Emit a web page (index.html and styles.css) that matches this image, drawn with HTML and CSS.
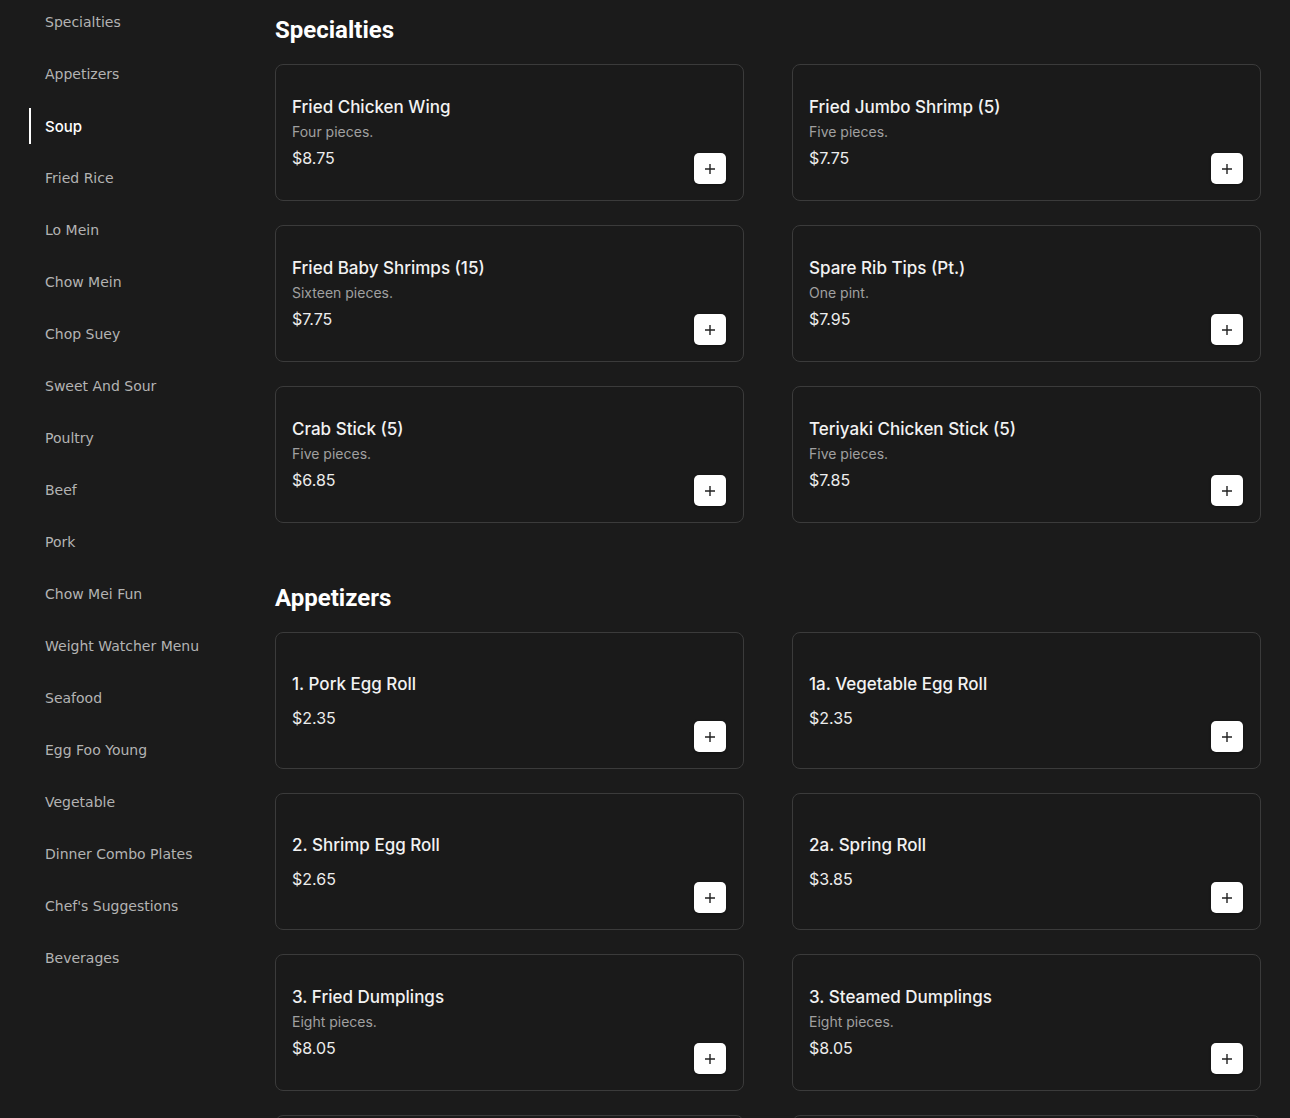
FILE: index.html
```html
<!DOCTYPE html>
<html>
<head>
<meta charset="utf-8">
<link rel="stylesheet" href="styles.css">
</head>
<body>
<div class="page">
  <nav class="sidebar">
    <a class="nav-item">Specialties</a>
    <a class="nav-item">Appetizers</a>
    <a class="nav-item active">Soup</a>
    <a class="nav-item">Fried Rice</a>
    <a class="nav-item">Lo Mein</a>
    <a class="nav-item">Chow Mein</a>
    <a class="nav-item">Chop Suey</a>
    <a class="nav-item">Sweet And Sour</a>
    <a class="nav-item">Poultry</a>
    <a class="nav-item">Beef</a>
    <a class="nav-item">Pork</a>
    <a class="nav-item">Chow Mei Fun</a>
    <a class="nav-item">Weight Watcher Menu</a>
    <a class="nav-item">Seafood</a>
    <a class="nav-item">Egg Foo Young</a>
    <a class="nav-item">Vegetable</a>
    <a class="nav-item">Dinner Combo Plates</a>
    <a class="nav-item">Chef's Suggestions</a>
    <a class="nav-item">Beverages</a>
  </nav>
  <main class="content">
    <section class="section">
      <h2 class="section-title">Specialties</h2>
      <div class="grid">
        <div class="card"><div class="info"><div class="name">Fried Chicken Wing</div><div class="desc">Four pieces.</div><div class="price">$8.75</div></div><button class="add"><svg viewBox="0 0 12 12" width="12" height="12"><path d="M6 1v10M1 6h10" stroke="#222" stroke-width="1.4"/></svg></button></div>
        <div class="card"><div class="info"><div class="name">Fried Jumbo Shrimp (5)</div><div class="desc">Five pieces.</div><div class="price">$7.75</div></div><button class="add"><svg viewBox="0 0 12 12" width="12" height="12"><path d="M6 1v10M1 6h10" stroke="#222" stroke-width="1.4"/></svg></button></div>
        <div class="card"><div class="info"><div class="name">Fried Baby Shrimps (15)</div><div class="desc">Sixteen pieces.</div><div class="price">$7.75</div></div><button class="add"><svg viewBox="0 0 12 12" width="12" height="12"><path d="M6 1v10M1 6h10" stroke="#222" stroke-width="1.4"/></svg></button></div>
        <div class="card"><div class="info"><div class="name">Spare Rib Tips (Pt.)</div><div class="desc">One pint.</div><div class="price">$7.95</div></div><button class="add"><svg viewBox="0 0 12 12" width="12" height="12"><path d="M6 1v10M1 6h10" stroke="#222" stroke-width="1.4"/></svg></button></div>
        <div class="card"><div class="info"><div class="name">Crab Stick (5)</div><div class="desc">Five pieces.</div><div class="price">$6.85</div></div><button class="add"><svg viewBox="0 0 12 12" width="12" height="12"><path d="M6 1v10M1 6h10" stroke="#222" stroke-width="1.4"/></svg></button></div>
        <div class="card"><div class="info"><div class="name">Teriyaki Chicken Stick (5)</div><div class="desc">Five pieces.</div><div class="price">$7.85</div></div><button class="add"><svg viewBox="0 0 12 12" width="12" height="12"><path d="M6 1v10M1 6h10" stroke="#222" stroke-width="1.4"/></svg></button></div>
      </div>
    </section>
    <section class="section">
      <h2 class="section-title">Appetizers</h2>
      <div class="grid">
        <div class="card"><div class="info"><div class="name">1. Pork Egg Roll</div><div class="price solo">$2.35</div></div><button class="add"><svg viewBox="0 0 12 12" width="12" height="12"><path d="M6 1v10M1 6h10" stroke="#222" stroke-width="1.4"/></svg></button></div>
        <div class="card"><div class="info"><div class="name">1a. Vegetable Egg Roll</div><div class="price solo">$2.35</div></div><button class="add"><svg viewBox="0 0 12 12" width="12" height="12"><path d="M6 1v10M1 6h10" stroke="#222" stroke-width="1.4"/></svg></button></div>
        <div class="card"><div class="info"><div class="name">2. Shrimp Egg Roll</div><div class="price solo">$2.65</div></div><button class="add"><svg viewBox="0 0 12 12" width="12" height="12"><path d="M6 1v10M1 6h10" stroke="#222" stroke-width="1.4"/></svg></button></div>
        <div class="card"><div class="info"><div class="name">2a. Spring Roll</div><div class="price solo">$3.85</div></div><button class="add"><svg viewBox="0 0 12 12" width="12" height="12"><path d="M6 1v10M1 6h10" stroke="#222" stroke-width="1.4"/></svg></button></div>
        <div class="card"><div class="info"><div class="name">3. Fried Dumplings</div><div class="desc">Eight pieces.</div><div class="price">$8.05</div></div><button class="add"><svg viewBox="0 0 12 12" width="12" height="12"><path d="M6 1v10M1 6h10" stroke="#222" stroke-width="1.4"/></svg></button></div>
        <div class="card"><div class="info"><div class="name">3. Steamed Dumplings</div><div class="desc">Eight pieces.</div><div class="price">$8.05</div></div><button class="add"><svg viewBox="0 0 12 12" width="12" height="12"><path d="M6 1v10M1 6h10" stroke="#222" stroke-width="1.4"/></svg></button></div>
        <div class="card"><div class="info"><div class="name">4. Fried Wonton (10)</div><div class="desc">Ten pieces.</div><div class="price">$5.25</div></div><button class="add"><svg viewBox="0 0 12 12" width="12" height="12"><path d="M6 1v10M1 6h10" stroke="#222" stroke-width="1.4"/></svg></button></div>
        <div class="card"><div class="info"><div class="name">5. Crab Rangoon (8)</div><div class="desc">Eight pieces.</div><div class="price">$7.25</div></div><button class="add"><svg viewBox="0 0 12 12" width="12" height="12"><path d="M6 1v10M1 6h10" stroke="#222" stroke-width="1.4"/></svg></button></div>
      </div>
    </section>
  </main>
</div>
</body>
</html>
```

FILE: styles.css
```css
html, body {
  margin: 0;
  padding: 0;
  background: #1b1b1b;
}
.page {
  display: grid;
  grid-template-columns: 275px 1fr;
  font-family: "DejaVu Sans", sans-serif;
}
.sidebar {
  display: flex;
  flex-direction: column;
  gap: 16px;
  padding: 4px 0 0 29px;
}
.nav-item {
  display: flex;
  align-items: center;
  height: 36px;
  border-left: 2px solid transparent;
  padding-left: 14px;
  font-size: 14px;
  color: #b3b3b3;
}
.nav-item.active {
  border-left-color: #ffffff;
  color: #ffffff;
  font-family: "Inter", sans-serif;
  font-weight: 500;
  font-size: 15px;
}
.content {
  padding: 14px 29px 0 0;
}
.section {
  margin-bottom: 59px;
}
.section-title {
  margin: 0 0 18px;
  font-family: "Roboto", sans-serif;
  font-weight: 700;
  font-size: 24px;
  line-height: 32px;
  color: #ffffff;
}
.grid {
  display: grid;
  grid-template-columns: 1fr 1fr;
  column-gap: 48px;
  row-gap: 24px;
}
.card {
  box-sizing: border-box;
  height: 137px;
  border: 1px solid #3b3b3b;
  border-radius: 8px;
  padding: 16px;
  display: flex;
  justify-content: space-between;
  align-items: center;
  background: #1a1a1a;
}
.info {
  display: flex;
  flex-direction: column;
  font-family: "Inter", sans-serif;
}
.name {
  font-size: 17px;
  font-weight: 500;
  line-height: 24px;
  color: #f2f2f2;
}
.desc {
  margin-top: 3px;
  font-size: 14px;
  line-height: 20px;
  color: #a0a0a0;
}
.price {
  margin-top: 4px;
  font-size: 16px;
  line-height: 24px;
  color: #ececec;
}
.price.solo {
  margin-top: 10px;
}
.add {
  align-self: flex-end;
  width: 32px;
  height: 31px;
  margin-right: 1px;
  border: none;
  border-radius: 5px;
  background: #ffffff;
  display: flex;
  align-items: center;
  justify-content: center;
  padding: 0;
  box-shadow: 0 1px 3px rgba(0,0,0,0.4);
}
```
